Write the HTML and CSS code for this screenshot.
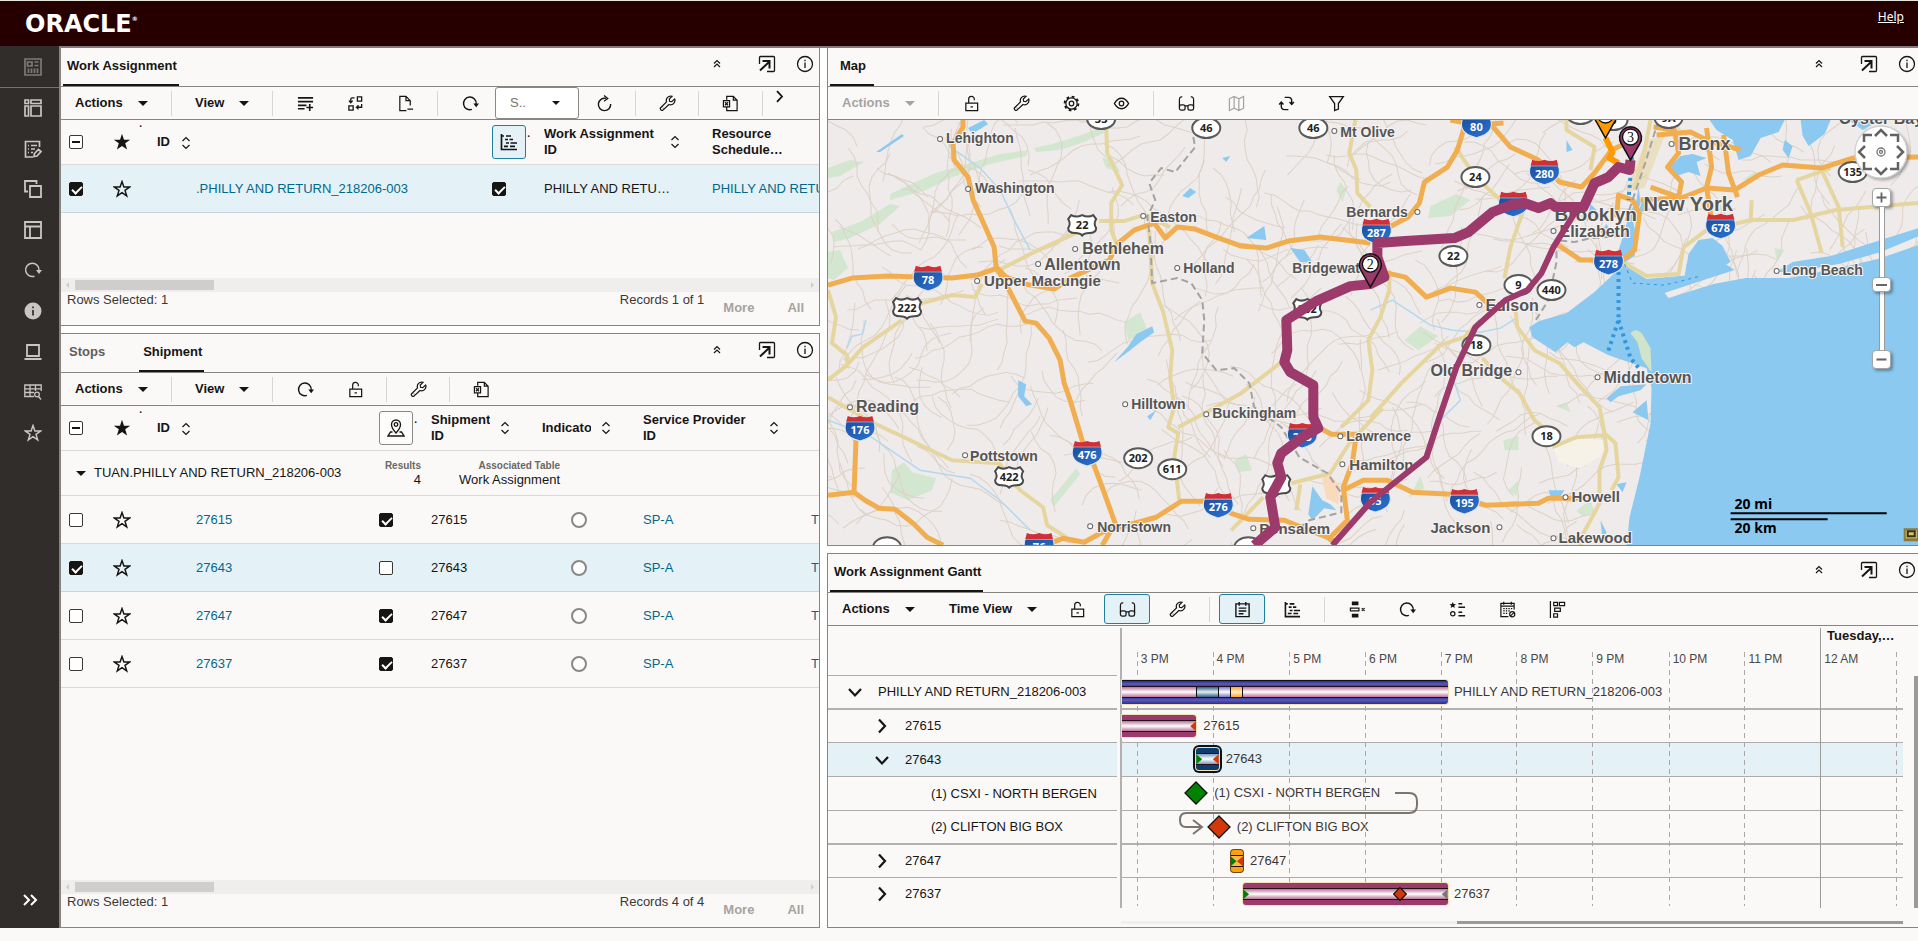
FILE: index.html
```html
<!DOCTYPE html>
<html lang="en">
<head>
<meta charset="utf-8">
<title>Work Assignment Workbench</title>
<link rel="stylesheet" href="styles.css">
</head>
<body>
<svg class="defs" aria-hidden="true">
  <defs>
    <linearGradient id="blue" x1="0" y1="0" x2="1" y2="1"><stop offset="0" stop-color="#1c4f9c"/><stop offset="1" stop-color="#2a74d6"/></linearGradient>
    <symbol id="i-popout" viewBox="0 0 18 18"><path d="M1.5 9V2.5Q1.500 1.500 2.500 1.500H15.500Q16.500 1.500 16.500 2.500V15.500Q16.500 16.500 15.500 16.500H9" /><path d="M2 15.500 11 7M4.500 6H11.500V13.500" stroke-width="2"/></symbol>
    <symbol id="i-info" viewBox="0 0 18 18"><circle cx="9" cy="9" r="7.500"/><path d="M9 7.500v5.500M9 4.800v1.400"/></symbol>
    <symbol id="i-up2" viewBox="0 0 18 18"><path d="M6 8.500 9 5.500l3 3M6 12 9 9l3 3" stroke-width="1.200"/></symbol>
    <symbol id="i-addrow" viewBox="0 0 18 18"><path d="M1 3H17M1 7H17M1 11H10M1 14.500H8M13.500 9.500V17M10 13.200H17" stroke-width="1.700"/></symbol>
    <symbol id="i-swap" viewBox="0 0 18 18"><path d="M11 2h4.500v4.500H11zM2 11.500h4.500V16H2zM8 3H5.500Q4 3 4 4.500V8M2 6l2 2.200L6 6M15.500 9.500V13H10M12.200 10.800 10 13l2.200 2.200" stroke-width="1.400"/></symbol>
    <symbol id="i-docminus" viewBox="0 0 18 18"><path d="M10 16.500H3V1.500H9.500L14 6V11M9.500 1.500V6H14M11 15H17"/></symbol>
    <symbol id="i-redo" viewBox="0 0 18 18"><path d="M10.500 15.200A6.700 6.700 0 1 1 15 9.500" stroke-width="1.500"/><path d="M12 9H18L15 13Z" fill="currentColor" stroke="none"/></symbol>
    <symbol id="i-reload" viewBox="0 0 18 18"><path d="M15.500 9.500A6.500 6.500 0 1 1 10.500 3.700" stroke-width="1.500"/><path d="M8.500 .5 12.500 3.700 8.500 6.500"/></symbol>
    <symbol id="i-wrench" viewBox="0 0 18 18"><path d="M13.800 1.400A4.600 4.600 0 0 0 8 7.300L1.500 13.700Q1 14.500 1.800 15.400 3 17 4.200 16L10.500 10A4.600 4.600 0 0 0 16.600 4.200L13.500 7 11.200 6.600 10.900 4.300Z"/><path d="M4 13.800h.6"/></symbol>
    <symbol id="i-excel" viewBox="0 0 18 18"><path d="M5 5V1.500H12L16 5.500V16.500H5V13M12 1.500V5.500H16M1.500 6H8V12.500H1.500ZM3.200 7.700 6.300 10.800M6.300 7.700 3.200 10.800"/></symbol>
    <symbol id="i-gantt" viewBox="0 0 18 18"><path d="M1.500 1V16.500H17M1.500 3H4M6 3H11M5 6.500H8M9.500 6.500H13M6 10H9M10.500 10H17M4 13.300H8M10 13.300H15" stroke-width="1.700"/></symbol>
    <symbol id="i-lock" viewBox="0 0 18 18"><path d="M3 8.500H15.500V16.500H3ZM6 8.500V4.500A3 3 0 0 1 12 4.300V5.500M8 12.500H10.500"/></symbol>
    <symbol id="i-pinmap" viewBox="0 0 18 18"><path d="M9 14Q4.500 9 4.500 5.500A4.500 4.500 0 0 1 13.500 5.500Q13.500 9 9 14ZM5.500 13H3.500L1 17H17L14.500 13H12.500"/><circle cx="9" cy="5.500" r="1.800"/></symbol>
    <symbol id="i-gear" viewBox="0 0 18 18"><circle cx="9" cy="9" r="2.400"/><circle cx="9" cy="9" r="6"/><circle cx="9" cy="9" r="7.300" stroke-dasharray="2.900 2.830" stroke-width="2"/></symbol>
    <symbol id="i-eye" viewBox="0 0 18 18"><path d="M1.500 9Q4.500 3.500 9 3.500T16.500 9Q13.500 14.500 9 14.500T1.500 9Z" stroke-width="1.500"/><circle cx="9" cy="9" r="2.400"/></symbol>
    <symbol id="i-glasses" viewBox="0 0 18 18"><path d="M4.500 2Q1.500 1.500 1.500 5V12.500M13.500 2Q16.500 1.500 16.500 5V12.500M7.500 11.500H10.500"/><rect x="1.500" y="10.500" width="6" height="5.500" rx="2"/><rect x="10.500" y="10.500" width="6" height="5.500" rx="2"/></symbol>
    <symbol id="i-map" viewBox="0 0 18 18"><path d="M1.500 4 6.500 1.500 11.500 4 16.500 1.500V14L11.500 16.500 6.500 14 1.500 16.500ZM6.500 1.500V14M11.500 4V16.500"/></symbol>
    <symbol id="i-sync" viewBox="0 0 18 18"><path d="M7 2.500H11Q14.500 2.500 14.500 6V9M11 15.500H7Q3.500 15.500 3.500 12V7.500M12.200 7.500l2.300 2.500 2.300-2.500M1.200 10l2.300-2.500L5.800 10" stroke-width="1.500"/></symbol>
    <symbol id="i-funnel" viewBox="0 0 18 18"><path d="M1.800 1.800H16.200L11 9V15L7 16.500V9Z" stroke-width="1.400"/></symbol>
    <symbol id="i-list" viewBox="0 0 18 18"><path d="M2 3H16V16.500H2ZM5.500 1V5M12.500 1V5M5 7.500H13M5 10.500H13M5 13.500H10" stroke-width="1.500"/></symbol>
    <symbol id="i-rows" viewBox="0 0 18 18"><path d="M3 2.500H10M3 15.500H10" stroke-width="4"/><path d="M1.500 7.500H10.500V10.500H1.500ZM13.500 7.500l3 3M16.500 7.500l-3 3"/></symbol>
    <symbol id="i-legend" viewBox="0 0 18 18"><path d="M4 1 5 3.300 7.400 3.500 5.600 5.100 6.200 7.500 4 6.200 1.800 7.500 2.400 5.100.6 3.500 3 3.300Z" fill="currentColor" stroke="none"/><circle cx="4" cy="13.500" r="2.300"/><path d="M10 3H14M10 6.500H17M10 12H14M10 15.500H17" stroke-width="1.600"/></symbol>
    <symbol id="i-calendar" viewBox="0 0 18 18"><path d="M10 16.500H2V2.500H16V9M5 .8V4M13 .8V4M2 5.500H16"/><path d="M4.500 8H14M4.500 10.500H12M4.500 13H10" stroke-dasharray="1.500 1.200"/><circle cx="14" cy="14" r="2.700"/><path d="m12 16 4-4"/></symbol>
    <symbol id="i-tree" viewBox="0 0 18 18"><path d="M1.500 0V18M5 1.500H9V5H5ZM11 1.500H16.500V5H11ZM6 7.500H12V11H6ZM5 13.500H9V17H5Z"/></symbol>
    <symbol id="i-sort" viewBox="0 0 10 14"><path d="M1.500 5 5 1.500 8.500 5M1.500 9 5 12.500 8.500 9" stroke-width="1.200"/></symbol>
    <symbol id="i-star" viewBox="0 0 18 18"><path d="M9 1.600 10.900 7H16.600L12 10.400 13.700 15.900 9 12.600 4.300 15.900 6 10.400 1.400 7H7.100Z" stroke-width="1.500"/></symbol>
    <symbol id="i-starfill" viewBox="0 0 18 18"><path d="M9 .8 11 6.700H17.200L12.200 10.300 14.100 16.600 9 12.900 3.900 16.600 5.800 10.300.8 6.700H7Z" fill="currentColor" stroke="none"/></symbol>
    <symbol id="i-down" viewBox="0 0 18 18"><path d="M3 6 9 12.500 15 6" stroke-width="2.200"/></symbol>
    <symbol id="i-right" viewBox="0 0 18 18"><path d="M6 2.500 12 9 6 15.500" stroke-width="2.200"/></symbol>
    <symbol id="n-dash" viewBox="0 0 18 18"><path d="M1 1H17V17H1ZM3.500 4H8V8H3.500ZM10.500 4H14.500M10.500 7.500H14.500M4.500 10.500V15M7.500 10.500V15M10.500 10.500V15M13.500 10.500V15" stroke-width="1.700"/></symbol>
    <symbol id="n-panels" viewBox="0 0 18 18"><path d="M1 1H4.500V4.500H1ZM7 1H17V4.500H7ZM1 7H4.500V17H1ZM7 7H17V17H7Z" stroke-width="1.700"/></symbol>
    <symbol id="n-note" viewBox="0 0 18 18"><path d="M9 17H1.500V1.500H15.500V7M4 5.500H5M7 5.500H13M4 9H5M7 9H11M4 12.500H5M7 12.500H9M10.500 13.500 14.500 9.500 17 11.500 13 16 10 16.500Z" stroke-width="1.700"/></symbol>
    <symbol id="n-copy" viewBox="0 0 18 18"><path d="M4 11.500H1V1H12.500V4M6 6H17V17H6Z" stroke-width="1.800"/></symbol>
    <symbol id="n-layout" viewBox="0 0 18 18"><path d="M1 1H17V17H1ZM1 5.500H17M6 5.500V17" stroke-width="1.800"/></symbol>
    <symbol id="n-info" viewBox="0 0 18 18"><circle cx="9" cy="9" r="8.500" fill="currentColor" stroke="none"/><path d="M9 8V13.500M9 4.500V6.300" stroke="#312d2a" stroke-width="1.700"/></symbol>
    <symbol id="n-laptop" viewBox="0 0 18 18"><path d="M3 2H15V13H3ZM.5 16H17.500" stroke-width="1.800"/></symbol>
    <symbol id="n-search" viewBox="0 0 18 18"><path d="M10 13.500H.8V2H17.200V8M.8 5.800H17.200M.8 9.500H10M6 2V13.500M11.500 2V8" stroke-width="1.300"/><circle cx="13" cy="11.500" r="2.300"/><path d="m14.500 13.500 2.500 3"/></symbol>
    <symbol id="inter" viewBox="-15 -13 30 26"><path d="M-13-6 Q-15 0-13 4 Q-11 9 0 12 Q11 9 13 4 Q15 0 13-6Z" fill="url(#blue)" stroke="#dfe6f2" stroke-width="1"/><path d="M-13-6-11.500-11.500Q-6-9 0-11.500 6-9 11.500-11.500L13-6Z" fill="#cf3037" stroke="none"/></symbol>
    <symbol id="oval" viewBox="-16 -12 32 24"><ellipse rx="14" ry="10" fill="#fff" stroke="#5a5a5a" stroke-width="2"/></symbol>
    <symbol id="us" viewBox="-16 -12 32 24"><path d="M-11-10Q-6-7 0-10 6-7 11-10L14-6Q11-1 14 3 14 8 7 8 2 8 0 10.500-2 8-7 8-14 8-14 3-11-1-14-6Z" fill="#fff" stroke="#4a4a4a" stroke-width="2"/></symbol>
  </defs>
</svg>

<header class="top">
  <a class="brand" href="#">ORACLE<span class="dot">®</span></a>
  <a class="help" href="#">Help</a>
</header>

<div class="shell">
  <nav class="rail" aria-label="Workbench">
    <button class="rail-btn dim" aria-label="Dashboard"><svg><use href="#n-dash"/></svg></button>
    <div class="rail-list">
      <button class="rail-btn" aria-label="Panels"><svg><use href="#n-panels"/></svg></button>
      <button class="rail-btn" aria-label="Edit layout"><svg><use href="#n-note"/></svg></button>
      <button class="rail-btn" aria-label="Copy"><svg><use href="#n-copy"/></svg></button>
      <button class="rail-btn" aria-label="Layout"><svg><use href="#n-layout"/></svg></button>
      <button class="rail-btn" aria-label="Refresh"><svg><use href="#i-redo"/></svg></button>
      <button class="rail-btn" aria-label="About"><svg><use href="#n-info"/></svg></button>
      <button class="rail-btn" aria-label="Screen"><svg><use href="#n-laptop"/></svg></button>
      <button class="rail-btn" aria-label="Saved search"><svg><use href="#n-search"/></svg></button>
      <button class="rail-btn" aria-label="Favorites"><svg><use href="#i-star"/></svg></button>
    </div>
    <button class="rail-btn expand" aria-label="Expand"><svg viewBox="0 0 18 18"><path d="M3 4 8 9 3 14M10 4 15 9 10 14" stroke-width="2"/></svg></button>
  </nav>

  <main class="work">
    <div class="column">
      <section class="panel assign-panel">
        <div class="tabs">
          <button class="tab active first">Work Assignment</button>
          <div class="tab-tools">
            <button aria-label="Collapse"><svg class="up"><use href="#i-up2"/></svg></button>
            <button aria-label="Open in window"><svg><use href="#i-popout"/></svg></button>
            <button aria-label="Information"><svg><use href="#i-info"/></svg></button>
          </div>
        </div>
        <div class="toolbar">
          <button class="menu">Actions<i class="caret"></i></button><i class="sep"></i>
          <button class="menu">View<i class="caret"></i></button><i class="sep"></i>
          <button class="tool" aria-label="Add row"><svg><use href="#i-addrow"/></svg></button>
          <button class="tool" aria-label="Swap"><svg><use href="#i-swap"/></svg></button>
          <button class="tool" aria-label="Remove"><svg><use href="#i-docminus"/></svg></button><i class="sep"></i>
          <button class="tool" aria-label="Refresh"><svg><use href="#i-redo"/></svg></button>
          <label class="pick"><select aria-label="Saved query"><option>S..</option></select><i class="caret"></i></label>
          <button class="tool" aria-label="Reload"><svg><use href="#i-reload"/></svg></button><i class="sep near"></i>
          <button class="tool" aria-label="Settings"><svg><use href="#i-wrench"/></svg></button><i class="sep near"></i>
          <button class="tool" aria-label="Export"><svg><use href="#i-excel"/></svg></button><i class="sep"></i>
          <button class="more-tools" aria-label="More tools"><svg><use href="#i-right"/></svg></button>
        </div>
        <div class="grid-wrap">
          <table class="grid">
            <colgroup><col class="w-check"><col class="w-star"><col class="w-id-a"><col class="w-icon"><col class="w-name"><col></colgroup>
            <thead><tr>
              <th><input class="partial" type="checkbox" aria-label="Select all"></th>
              <th class="mid"><span class="tiny">.</span><svg><use href="#i-starfill"/></svg></th>
              <th class="idh">ID<button class="sort" aria-label="Sort by ID"><svg><use href="#i-sort"/></svg></button></th>
              <th><button class="boxed on" aria-label="Show in Gantt"><svg><use href="#i-gantt"/></svg></button><span class="tiny low">.</span></th>
              <th><div class="head"><span>Work Assignment ID</span><button class="sort" aria-label="Sort"><svg><use href="#i-sort"/></svg></button></div></th>
              <th><div class="head"><span>Resource<br>Schedule…</span></div></th>
            </tr></thead>
            <tbody><tr class="sel">
              <td><input type="checkbox" checked aria-label="Select row"></td>
              <td class="mid"><button class="plain" aria-label="Favorite"><svg><use href="#i-star"/></svg></button></td>
              <td class="idc"><a href="#">.PHILLY AND RETURN_218206-003</a></td>
              <td><input type="checkbox" checked aria-label="Show in Gantt"></td>
              <td>PHILLY AND RETU…</td>
              <td><a href="#">PHILLY AND RETURN</a></td>
            </tr></tbody>
          </table>
        </div>
        <div class="hscroll"><i class="tri l"></i><i class="thumb"></i><i class="tri r"></i></div>
        <footer class="foot"><span>Rows Selected: 1</span><span class="rec">Records 1 of 1</span><button disabled>More</button><button disabled>All</button></footer>
      </section>

      <section class="panel ship-panel">
        <div class="tabs">
          <button class="tab stops">Stops</button>
          <button class="tab active ship">Shipment</button>
          <div class="tab-tools">
            <button aria-label="Collapse"><svg class="up"><use href="#i-up2"/></svg></button>
            <button aria-label="Open in window"><svg><use href="#i-popout"/></svg></button>
            <button aria-label="Information"><svg><use href="#i-info"/></svg></button>
          </div>
        </div>
        <div class="toolbar">
          <button class="menu">Actions<i class="caret"></i></button><i class="sep"></i>
          <button class="menu">View<i class="caret"></i></button><i class="sep"></i>
          <button class="tool" aria-label="Refresh"><svg><use href="#i-redo"/></svg></button>
          <button class="tool" aria-label="Lock"><svg><use href="#i-lock"/></svg></button><i class="sep near"></i>
          <button class="tool" aria-label="Settings"><svg><use href="#i-wrench"/></svg></button><i class="sep near"></i>
          <button class="tool" aria-label="Export"><svg><use href="#i-excel"/></svg></button>
        </div>
        <div class="grid-wrap">
          <table class="grid">
            <colgroup><col class="w-check"><col class="w-star"><col class="w-id-b"><col class="w-icon"><col class="w-sid"><col class="w-ind"><col class="w-name"><col></colgroup>
            <thead><tr>
              <th><input class="partial" type="checkbox" aria-label="Select all"></th>
              <th class="mid"><span class="tiny">.</span><svg><use href="#i-starfill"/></svg></th>
              <th class="idh">ID<button class="sort" aria-label="Sort by ID"><svg><use href="#i-sort"/></svg></button></th>
              <th><button class="boxed" aria-label="Show on map"><svg><use href="#i-pinmap"/></svg></button><span class="tiny low">.</span></th>
              <th><div class="head"><span>Shipment ID</span><button class="sort" aria-label="Sort"><svg><use href="#i-sort"/></svg></button></div></th>
              <th><div class="head"><span>Indicator</span><button class="sort" aria-label="Sort"><svg><use href="#i-sort"/></svg></button></div></th>
              <th><div class="head"><span>Service Provider ID</span><button class="sort" aria-label="Sort"><svg><use href="#i-sort"/></svg></button></div></th>
              <th><div class="head"><span>Service<br>Type</span></div></th>
            </tr></thead>
            <tbody>
              <tr class="group"><td colspan="8"><div class="group-row"><i class="caret"></i><span class="group-name">TUAN.PHILLY AND RETURN_218206-003</span><span class="stat results"><small>Results</small>4</span><span class="stat assoc"><small>Associated Table</small>Work Assignment</span></div></td></tr>
              <tr>
                <td><input type="checkbox" aria-label="Select 27615"></td><td class="mid"><button class="plain" aria-label="Favorite"><svg><use href="#i-star"/></svg></button></td>
                <td class="idc"><a href="#">27615</a></td><td><input type="checkbox" checked aria-label="Map 27615"></td><td>27615</td><td class="mid"><i class="ring"></i></td><td><a href="#">SP-A</a></td><td><a href="#">TL</a></td>
              </tr>
              <tr class="sel">
                <td><input type="checkbox" checked aria-label="Select 27643"></td><td class="mid"><button class="plain" aria-label="Favorite"><svg><use href="#i-star"/></svg></button></td>
                <td class="idc"><a href="#">27643</a></td><td><input type="checkbox" aria-label="Map 27643"></td><td>27643</td><td class="mid"><i class="ring"></i></td><td><a href="#">SP-A</a></td><td><a href="#">TL</a></td>
              </tr>
              <tr>
                <td><input type="checkbox" aria-label="Select 27647"></td><td class="mid"><button class="plain" aria-label="Favorite"><svg><use href="#i-star"/></svg></button></td>
                <td class="idc"><a href="#">27647</a></td><td><input type="checkbox" checked aria-label="Map 27647"></td><td>27647</td><td class="mid"><i class="ring"></i></td><td><a href="#">SP-A</a></td><td><a href="#">TL</a></td>
              </tr>
              <tr>
                <td><input type="checkbox" aria-label="Select 27637"></td><td class="mid"><button class="plain" aria-label="Favorite"><svg><use href="#i-star"/></svg></button></td>
                <td class="idc"><a href="#">27637</a></td><td><input type="checkbox" checked aria-label="Map 27637"></td><td>27637</td><td class="mid"><i class="ring"></i></td><td><a href="#">SP-A</a></td><td><a href="#">TL</a></td>
              </tr>
            </tbody>
          </table>
        </div>
        <div class="hscroll"><i class="tri l"></i><i class="thumb"></i><i class="tri r"></i></div>
        <footer class="foot"><span>Rows Selected: 1</span><span class="rec">Records 4 of 4</span><button disabled>More</button><button disabled>All</button></footer>
      </section>
    </div>

    <div class="column">
      <section class="panel map-panel">
        <div class="tabs">
          <button class="tab active map-tab">Map</button>
          <div class="tab-tools">
            <button aria-label="Collapse"><svg class="up"><use href="#i-up2"/></svg></button>
            <button aria-label="Open in window"><svg><use href="#i-popout"/></svg></button>
            <button aria-label="Information"><svg><use href="#i-info"/></svg></button>
          </div>
        </div>
        <div class="toolbar">
          <button class="menu" disabled>Actions<i class="caret"></i></button><i class="sep"></i>
          <button class="tool" aria-label="Lock"><svg><use href="#i-lock"/></svg></button>
          <button class="tool" aria-label="Settings"><svg><use href="#i-wrench"/></svg></button>
          <button class="tool" aria-label="Options"><svg><use href="#i-gear"/></svg></button>
          <button class="tool" aria-label="Visibility"><svg><use href="#i-eye"/></svg></button><i class="sep"></i>
          <button class="tool" aria-label="View"><svg><use href="#i-glasses"/></svg></button>
          <button class="tool" aria-label="Map" disabled><svg><use href="#i-map"/></svg></button>
          <button class="tool" aria-label="Sync"><svg><use href="#i-sync"/></svg></button>
          <button class="tool" aria-label="Filter"><svg><use href="#i-funnel"/></svg></button>
        </div>
        <div class="map">
          <svg class="map-svg" viewBox="828 120 1090 425" preserveAspectRatio="xMinYMin slice" role="img" aria-label="Route map">
            <rect x="828" y="120" width="1090" height="425" fill="#efebeb"/>
            <g class="green">
              <path d="M1034 148 1052 144 1084 134 1104 126 1106 132 1084 142 1060 150 1036 152Z"/>
              <path d="M890 194 920 180 938 172 960 166 1000 154 1028 150 1026 156 990 164 950 178 926 190 890 200Z"/>
              <path d="M832 232 860 222 890 204 900 206 880 224 850 238 834 242ZM828 168 850 160 864 162 840 176 828 178Z"/>
              <path d="M828 252 840 250 848 268 834 280 828 278ZM1102 158 1112 158 1120 172 1106 168ZM1340 182 1346 190 1342 202 1336 190Z"/>
              <path d="M892 470 904 462 912 472 936 478 932 490 908 500 890 492ZM1050 500 1076 468 1080 474 1054 506ZM1124 322 1140 312 1148 332 1128 340ZM1234 460 1246 454 1252 470 1238 472Z"/>
              <path d="M1430 206 1456 194 1470 200 1450 216 1428 218ZM1404 340 1420 326 1438 336 1418 350ZM1503 440 1518 436 1518 450 1504 450ZM1508 490 1518 480 1516 496ZM1576 510 1590 500 1594 512 1582 516Z"/>
              <path d="M1728 120 1740 124 1738 132 1726 130ZM1774 248 1784 250 1776 262ZM1612 292 1604 304 1596 306ZM1742 180 1754 172 1760 180ZM1556 406 1566 402 1570 412ZM1420 476 1408 498 1424 488Z"/>
            </g>
            <g class="minor" id="minor"></g>
            <path d="M1552 446 1580 438 1606 440 1600 456 1580 468 1558 462Z" fill="#f6f2e8"/>
            <path d="M1322 478 1328 472 1340 486 1338 504 1326 498Z" fill="#fbd9bd"/>
            <g class="water">
              <path d="M1918 245 1877 259 1838 268 1789 278 1745 278 1713 284 1668 298 1664 293 1700 281 1734 270 1722 262 1690 275 1646 279 1622 264 1612 275 1594 292 1566 313 1538 321 1529 327 1532 337 1555 352 1567 342 1574 347 1583 342 1608 355 1646 368 1651 387 1650 423 1639 477 1629 517 1626 545H1918Z"/>
              <path d="M1709 120H1784L1778 132 1760 138 1750 156 1738 160 1732 140 1716 130ZM1800 120H1830L1824 134 1808 146 1802 136ZM1848 120H1880L1862 130ZM1784 140 1792 146 1788 158 1782 150Z"/>
              <path d="M1684 276 1688 254 1698 240 1712 238 1722 246 1730 262 1716 270 1700 274Z"/>
              <path d="M1636 200 1628 216 1624 232 1618 250 1622 264 1634 256 1636 236 1632 220 1640 204 1638 186ZM1600 232 1606 224 1612 234 1604 238ZM1590 204 1596 210 1586 222Z"/>
              <path d="M1668 168 1680 156 1692 154 1706 158 1696 162 1700 176 1688 172 1676 176ZM1566 140 1572 150 1566 152Z"/>
              <path d="M1776 272 1792 262 1830 256 1880 240 1918 228V236L1880 252 1838 264 1790 272Z"/>
              <path d="M1606 398 1620 386 1646 384 1640 390 1618 396 1610 402ZM1632 412 1646 400 1648 420 1636 414ZM1638 212 1650 210 1642 200Z"/>
              <path d="M1312 486 1322 500 1330 504 1336 510 1324 508 1312 520 1308 514ZM1548 490 1564 490 1560 496 1550 496ZM1616 484 1626 482 1622 492ZM1600 520 1606 532 1602 540Z"/>
              <path d="M1114 362 1128 346 1136 334 1152 326 1154 332 1140 342 1130 350ZM1147 416 1156 410 1150 420ZM1018 380 1026 384 1024 396 1032 404 1026 406 1018 396ZM1182 196 1190 188 1196 192 1188 198ZM1290 248 1304 250 1312 262 1300 262ZM1246 238 1264 226 1266 240Z"/>
              <path d="M968 128 984 120 988 124 972 134ZM876 152 902 134 904 136 880 152ZM1222 158 1230 156 1226 162Z"/>
            </g>
            <path d="M1630 333Q1635 327 1642 334L1650 348 1651 372 1641 358 1637 342Z" fill="#cfe4c8"/>
            <g class="rivers"><path d="M948 145 980 168 1000 190 1014 220 1030 250M828 420 870 436 920 470 970 478 1000 500 1030 530M847 348 852 336 862 334 866 320M1370 310 1392 300 1430 325 1452 330 1480 332 1500 328 1516 318M1440 420 1460 400 1450 370"/></g>
            <g class="yellow">
              <path d="M1106 127 1107 153 1122 185 1111 203 1111 230 1116 243M995 272 1034 252 1082 230M1099 221H1124L1143 215 1170 227M1149 230 1152 283 1163 312 1172 350 1170 377 1174 407 1168 427 1178 433 1174 457 1179 500"/>
              <path d="M1178 427 1206 412 1241 393 1281 362M828 397 874 423 906 438 952 460 999 463 1020 490 1043 507 1047 525 1066 537M828 380 847 365 863 347 902 320M915 305 952 295 975 297 982 284M828 290 836 317 832 343 847 355V368"/>
              <path d="M1355 120 1349 153 1356 170 1357 193 1370 207M1370 418 1401 383 1440 345 1464 337 1480 320M1515 310 1517 327 1534 350 1559 363 1580 387 1599 407 1604 433 1615 443 1618 477 1611 490"/>
              <path d="M1482 358 1503 380 1519 393 1534 420 1546 430M1552 447 1576 437 1604 435 1606 450 1599 470 1599 503 1583 533 1580 545M1389 270 1389 290 1380 317 1368 340 1372 370 1368 400 1341 427M1382 408 1349 443 1330 473 1291 483M1231 530 1263 497"/>
              <path d="M1566 120 1566 130 1594 147 1590 170M1524 207 1510 247 1504 278M1683 247 1706 230 1751 220 1793 220 1835 210 1918 203M1796 180 1810 213 1821 253M1821 170 1838 207 1842 247M1622 262 1646 276 1678 274 1683 247M1640 170 1650 120M1644 150 1634 190M1455 147 1475 177 1500 200M1300 484 1296 510M1751 200 1750 222M1796 180 1830 168"/>
            </g>
            <path d="M1646 140Q1634 168 1626 192L1644 188 1664 136Z" fill="#e6d7a6" opacity=".6"/>
            <g class="orange">
              <path d="M963 120V127L953 143 954 160 968 177 973 200 982 220 994 247 996 267 1009 290 1025 321 1036 323 1049 338 1060 360 1064 383 1070 400 1082 440 1093 463 1102 487 1115 523 1102 545"/>
              <path d="M828 285 852 278 888 276 952 278 977 275 997 268 1006 277 1025 284 1054 289 1070 278 1109 260 1118 243 1134 230 1154 223 1165 238 1177 227 1195 229 1216 237 1241 246 1266 248 1288 241 1320 237 1370 243"/>
              <path d="M828 495 854 492 856 440M854 492 865 500 879 508 895 509 913 523 927 537 943 545M1052 542 1063 538 1084 542 1102 532 1156 517 1181 501H1204L1231 513 1249 519 1284 520 1334 540M1320 428 1331 434H1356L1352 463 1343 487 1347 520 1327 540"/>
              <path d="M1343 490 1363 480H1387L1412 492 1450 494 1485 505 1538 503 1548 498H1580M1464 127 1457 150 1447 167 1424 182 1419 203 1408 217 1387 228M1450 120 1476 125 1503 123M1491 125 1510 147 1538 160 1559 182 1581 187 1594 173 1611 150 1628 142"/>
              <path d="M1387 273 1405 277 1426 297 1450 288 1475 292 1495 310M1555 243 1580 260H1622L1634 250 1639 213 1632 200 1618 195 1616 217M1653 127 1674 130 1678 153 1667 167 1681 182 1678 197 1650 187M1706 128 1711 167 1706 187 1711 220M1723 135 1728 173 1737 197M1640 200 1681 198 1706 188 1734 190 1758 175 1782 165 1821 168 1852 158 1918 157M1656 135 1690 132 1706 140 1740 150"/>
            </g>
            <path class="border" d="M1193 137 1195 147 1175 172 1161 168 1149 183 1155 200 1147 217 1150 240 1152 283 1177 278 1191 283 1202 300 1204 320 1202 353 1216 370 1234 368 1249 383 1254 407 1281 427 1299 457 1327 473 1341 493V512L1309 520 1288 537M1658 120 1644 165 1632 200 1620 236 1590 238 1574 242 1556 240V262L1548 300 1534 322"/>
            <path class="ferry" d="M1618 265V320L1607 353M1618 320 1630 358 1640 370M1632 150 1628 200"/>
            <path class="ferry faint" d="M1624 264 1632 283 1664 285 1700 276"/>
            <g id="shields"></g>
            <g id="places" class="places"></g>
            <path class="route side" d="M1605 138 1612 152 1609 158 1618 163"/>
            <path class="route thin" d="M1576 210 1553 247 1541 273 1527 290 1505 300 1475 327 1456 367 1438 420 1426 457 1391 485 1370 502 1332 545"/>
            <path class="route" d="M1630 160 1629 170 1618 167 1608 177 1594 183 1583 207H1555L1550 203 1538 208 1524 203 1510 205 1492 212 1468 232 1454 238 1405 241 1377 243V257L1384 277 1370 284 1350 286 1316 301 1286 320 1287 350 1284 362 1290 372 1313 385V417L1318 428 1302 437 1281 453 1277 463 1281 477 1270 497 1275 527 1254 545"/>
            <g class="pins">
              <path d="M1605 138 1596 122A11 11 0 1 1 1614 122Z" fill="#ff9a00"/><circle cx="1605" cy="115" r="8"/>
              <path d="M1630 160 1621 144A11 11 0 1 1 1639 144Z" fill="#9b3a6b"/><circle cx="1630" cy="137" r="8"/><text x="1630" y="142">3</text>
              <path d="M1370 287 1361 271A11 11 0 1 1 1379 271Z" fill="#9b3a6b"/><circle cx="1370" cy="264" r="8"/><text x="1370" y="269">2</text>
            </g>
            <g class="scale"><path d="M1730 513H1886M1730 519H1827"/><text x="1734" y="509">20 mi</text><text x="1734" y="533">20 km</text></g>
            <g><rect x="1903" y="528" width="15" height="13" fill="#8d7a3c"/><rect x="1905" y="530" width="11" height="8" fill="#d9c46a"/><rect x="1907" y="531" width="7" height="5" fill="none" stroke="#35301c" stroke-width="2"/></g>
          </svg>
          <div class="map-nav">
            <button class="pan" aria-label="Pan"><svg viewBox="0 0 54 54"><circle cx="27" cy="27" r="26" fill="#fff" stroke="#cfcfcf"/><g stroke="#626262" stroke-width="2.500"><path d="M21 11 27 5 33 11M21 43 27 49 33 43M11 21 5 27 11 33M43 21 49 27 43 33M10 17V10H18M36 10H44V17M10 37V44H18M36 44H44V37"/></g><circle cx="27" cy="27" r="4" stroke="#777"/><circle cx="27" cy="27" r="1.500" stroke="#777"/></svg></button>
            <button class="zoom" aria-label="Zoom in"><svg viewBox="0 0 18 18"><path d="M3 9H15M9 3V15" stroke-width="2.200"/></svg></button>
            <input class="zoom-slider" type="range" min="0" max="100" value="45" aria-label="Zoom level">
            <button class="zoom" aria-label="Zoom out"><svg viewBox="0 0 18 18"><path d="M3 9H15" stroke-width="2.500"/></svg></button>
          </div>
        </div>
      </section>

      <section class="panel gantt-panel">
        <div class="tabs">
          <button class="tab active gantt-tab">Work Assignment Gantt</button>
          <div class="tab-tools">
            <button aria-label="Collapse"><svg class="up"><use href="#i-up2"/></svg></button>
            <button aria-label="Open in window"><svg><use href="#i-popout"/></svg></button>
            <button aria-label="Information"><svg><use href="#i-info"/></svg></button>
          </div>
        </div>
        <div class="toolbar">
          <button class="menu">Actions<i class="caret"></i></button>
          <button class="menu wide">Time View<i class="caret"></i></button>
          <button class="tool" aria-label="Lock"><svg><use href="#i-lock"/></svg></button>
          <button class="tool pressed" aria-label="View"><svg><use href="#i-glasses"/></svg></button>
          <button class="tool" aria-label="Settings"><svg><use href="#i-wrench"/></svg></button><i class="sep"></i>
          <button class="tool pressed" aria-label="Details"><svg><use href="#i-list"/></svg></button>
          <button class="tool" aria-label="Gantt"><svg><use href="#i-gantt"/></svg></button><i class="sep"></i>
          <button class="tool" aria-label="Collapse rows"><svg><use href="#i-rows"/></svg></button>
          <button class="tool" aria-label="Refresh"><svg><use href="#i-redo"/></svg></button>
          <button class="tool" aria-label="Legend"><svg><use href="#i-legend"/></svg></button>
          <button class="tool" aria-label="Calendar"><svg><use href="#i-calendar"/></svg></button>
          <button class="tool" aria-label="Hierarchy"><svg><use href="#i-tree"/></svg></button>
        </div>
        <div class="gantt">
          <div class="names">
            <div class="g-head"></div>
            <div class="g-row thick"><button class="twist" aria-label="Collapse"><svg><use href="#i-down"/></svg></button>PHILLY AND RETURN_218206-003</div>
            <div class="g-row lv2"><button class="twist" aria-label="Expand"><svg><use href="#i-right"/></svg></button>27615</div>
            <div class="g-row lv2 sel"><button class="twist" aria-label="Collapse"><svg><use href="#i-down"/></svg></button>27643</div>
            <div class="g-row lv3">(1) CSXI - NORTH BERGEN</div>
            <div class="g-row lv3 thick">(2) CLIFTON BIG BOX</div>
            <div class="g-row lv2"><button class="twist" aria-label="Expand"><svg><use href="#i-right"/></svg></button>27647</div>
            <div class="g-row lv2 last"><button class="twist" aria-label="Expand"><svg><use href="#i-right"/></svg></button>27637</div>
          </div>
          <div class="timeline">
            <div class="g-head"><span class="day" style="left:89.9%">Tuesday,…</span></div>
            <div class="g-row thick">
              <div class="bar assign flat" style="left:0%;width:41.7%"><div class="lane"><i class="seg blue" style="left:22.7%;width:7.2%"></i><i class="seg gap" style="left:29.9%;width:3.2%"></i><i class="seg gold" style="left:33.1%;width:4.1%"></i></div></div>
              <span class="label" style="left:42.5%">PHILLY AND RETURN_218206-003</span>
            </div>
            <div class="g-row">
              <div class="bar flat" style="left:0%;width:9.5%"><div class="lane"><i class="arrow end"></i></div></div>
              <span class="label" style="left:10.4%">27615</span>
            </div>
            <div class="g-row sel">
              <div class="bar navy picked" style="left:9.5%;width:2.9%"><div class="lane"><i class="arrow start"></i><i class="arrow end"></i></div></div>
              <span class="label" style="left:13.3%">27643</span>
            </div>
            <div class="g-row">
              <svg class="gem go" viewBox="0 0 24 24" style="left:9.5%"><path d="M12 1 23 12 12 23 1 12Z"/></svg>
              <span class="label" style="left:11.8%">(1) CSXI - NORTH BERGEN</span>
              <svg class="link" viewBox="0 0 246 52" style="left:7.1%"><path d="M218 6H232Q240 6 240 14V18Q240 26 232 26H9Q3 26 3 33T9 40H24M16 33 25 40 16 47"/></svg>
            </div>
            <div class="g-row thick">
              <svg class="gem stop" viewBox="0 0 24 24" style="left:12.4%"><path d="M12 1 23 12 12 23 1 12Z"/></svg>
              <span class="label" style="left:14.7%">(2) CLIFTON BIG BOX</span>
            </div>
            <div class="g-row">
              <div class="bar amber" style="left:13.9%;width:1.6%"><div class="lane"><i class="arrow start"></i><i class="arrow end"></i></div></div>
              <span class="label" style="left:16.4%">27647</span>
            </div>
            <div class="g-row last">
              <div class="bar" style="left:15.5%;width:26.2%"><div class="lane"><i class="arrow start"></i><i class="arrow end gray"></i></div></div>
              <svg class="gem stop small" viewBox="0 0 24 24" style="left:35.6%"><path d="M12 1 23 12 12 23 1 12Z"/></svg>
              <span class="label" style="left:42.5%">27637</span>
            </div>
            <div class="hours">
              <span style="left:1.9%">3 PM</span><span style="left:11.6%">4 PM</span><span style="left:21.4%">5 PM</span><span style="left:31.1%">6 PM</span><span style="left:40.8%">7 PM</span><span style="left:50.5%">8 PM</span><span style="left:60.2%">9 PM</span><span style="left:70%">10 PM</span><span style="left:79.7%">11 PM</span><span class="solid" style="left:89.4%">12 AM</span><span style="left:99.1%"></span>
            </div>
          </div>
          <div class="g-side"><i></i></div>
        </div>
        <div class="g-scroll"><i></i></div>
      </section>
    </div>
  </main>
</div>
<script src="script.js"></script>
</body>
</html>
```
FILE: styles.css
```css
:root {
  --ink: #161513;
  --line: #878582;
  --soft: #dcdad8;
  --paper: #fbf9f8;
  --pick: #e4f1f7;
  --link: #00688c;
  --plum: #9b3a6b;
}
* { box-sizing: border-box; }
body {
  margin: 0;
  min-height: 100vh;
  display: flex;
  flex-direction: column;
  padding-bottom: 13px;
  background: var(--paper);
  color: var(--ink);
  font: 13px/16px "Liberation Sans", Arial, sans-serif;
}
.defs { position: absolute; width: 0; height: 0; }
svg { fill: none; stroke: currentColor; stroke-width: 1.3; width: 18px; height: 18px; display: block; }
button { font: inherit; color: inherit; border: 0; background: none; padding: 0; margin: 0; }
a { color: var(--link); text-decoration: none; }
i { font-style: normal; }

.top {
  height: 48px;
  flex: none;
  display: flex;
  justify-content: space-between;
  align-items: flex-start;
  padding: 0 14px 0 25px;
  background: #260000;
  border-top: 1px solid #e6e8df;
  border-bottom: 2px solid #857a7c;
}
.brand { color: #fff; font: bold 24px/46px "DejaVu Sans", sans-serif; display: flex; align-items: flex-start; }
.brand .dot { font-size: 6px; line-height: 36px; }
.help { color: #fff; text-decoration: underline; font: 12px/16px "Noto Sans", sans-serif; padding-top: 8px; }

.shell { flex: 1; display: flex; min-height: 0; }
.rail { width: 61px; flex: none; background: #312d2a; border-right: 2px solid #878380; display: flex; flex-direction: column; color: #c9c6c4; margin-top: -2px; }
.rail-btn { display: grid; place-items: center; padding-left: 6px; width: 100%; }
.rail-btn.dim { height: 42px; color: #7d7a78; border-bottom: 1px solid #77736f; }
.rail-list { display: grid; grid-auto-rows: 1fr; height: 365px; }
.rail .expand { margin-top: auto; height: 56px; color: #fff; padding-left: 0; }

.work { flex: 1; display: grid; grid-template-columns: 759fr 1091fr; column-gap: 7px; background: #fff; min-width: 0; }
.column { display: flex; flex-direction: column; gap: 7px; min-width: 0; }
.panel { background: var(--paper); border: 1px solid var(--line); display: flex; flex-direction: column; min-height: 0; overflow: hidden; }
.assign-panel { flex: 278 1 0; border-left: 0; border-top: 0; }
.ship-panel { flex: 595 1 0; border-left: 0; }
.map-panel { flex: 499 1 0; border-right: 0; border-top: 0; }
.gantt-panel { flex: 374 1 0; border-right: 0; }

.tabs { height: 39px; flex: none; display: flex; border-bottom: 1px solid var(--line); }
.tab { height: 38px; padding: 0 2px; font-weight: bold; border-bottom: 2px solid transparent; color: #605d5a; }
.tab.active { border-bottom-color: var(--ink); color: var(--ink); }
.tab.first, .gantt-tab { margin-left: 2px; padding-left: 4px; }
.tab.stops { margin-left: 6px; }
.tab.ship { margin-left: 32px; padding: 0 2px 0 4px; }
.map-tab { margin-left: 2px; padding: 0 8px 0 10px; }
.tab-tools { margin-left: auto; display: flex; gap: 32px; padding: 7px 5px 0 0; align-items: flex-start; }
.tab-tools button + button + button { margin-left: -12px; }
.map-panel .tab-tools, .gantt-panel .tab-tools { padding-right: 2px; }

.toolbar { height: 33px; flex: none; display: flex; align-items: center; border-bottom: 1px solid var(--line); }
.menu { width: 103px; height: 32px; flex: none; display: flex; align-items: center; gap: 15px; padding-left: 14px; font-weight: bold; }
.sep + .menu { width: 86px; padding-left: 16px; }
.menu + .menu { width: 121px; padding-left: 18px; }
.menu:disabled, .tool:disabled { color: #a5a3a1; }
.caret { border: 5px solid transparent; border-top-color: currentColor; border-bottom: 0; flex: none; }
.sep { width: 1px; height: 25px; margin: 0 7px; background: #d8d6d4; flex: none; }
.sep.near { margin: 0 6px; }
.tool { width: 50px; height: 32px; flex: none; display: grid; place-items: center; }
.tool.pressed { width: 46px; height: 30px; margin: 0 2px; background: var(--pick); border: 1px solid #1f7f9f; border-radius: 3px; }
.tool svg { width: 17px; height: 17px; }
.pick { width: 84px; height: 32px; flex: none; display: flex; align-items: center; padding: 0 18px 0 14px; border: 1px solid #8a8886; border-radius: 3px; background: #fff; }
.pick select { appearance: none; flex: 1; min-width: 0; border: 0; padding: 0; background: none; font: inherit; color: #767370; }
.pick .caret { border-width: 4px; border-bottom-width: 0; }
.more-tools { margin: 0 0 14px 2px; }
.more-tools svg { width: 15px; height: 15px; }

.grid-wrap { flex: 1; overflow: hidden; }
.grid { width: 100%; border-collapse: separate; border-spacing: 0; table-layout: fixed; }
.grid .w-check { width: 40px; }
.grid .w-star { width: 41px; }
.grid .w-id-a { width: 336px; }
.grid .w-id-b { width: 223px; }
.grid .w-icon { width: 52px; }
.grid .w-sid { width: 111px; }
.grid .w-ind { width: 101px; }
.grid .w-name { width: 168px; }
.grid th { height: 45px; text-align: left; padding: 0 0 0 14px; border-bottom: 1px solid var(--soft); position: relative; }
.grid th:first-child, .grid td:first-child { padding-left: 8px; }
.grid td { height: 48px; padding: 0 0 0 14px; border-bottom: 1px solid var(--soft); white-space: nowrap; overflow: hidden; }
.grid .mid { padding: 0; }
.grid .mid svg, .grid .ring { margin: 0 auto; }
.grid .mid .plain { display: block; margin: 0 auto; }
.grid .sel { background: var(--pick); }
.grid .sel td { border-bottom-color: #c3d5de; }
.grid .idh { padding-left: 15px; }
.grid .idc { padding-left: 54px; }
.idh .sort { margin-left: 11px; vertical-align: middle; }
.sort svg { width: 10px; height: 14px; }
.tiny { position: absolute; right: 0; top: -4px; font-size: 10px; }
.tiny.low { top: 6px; }
.head { display: flex; align-items: center; justify-content: space-between; padding-right: 18px; }
.head span { overflow: hidden; min-width: 0; line-height: 16px; }
.head .sort { flex: none; margin-left: 10px; }
.boxed { width: 34px; height: 34px; display: grid; place-items: center; border: 1px solid #8a8886; border-radius: 3px; background: #fdfcfb; }
.boxed.on { background: var(--pick); border-color: #1f7f9f; }
.ring { display: block; width: 16px; height: 16px; border: 2px solid #8a8886; border-radius: 50%; background: #fff; }

input[type="checkbox"] { appearance: none; display: block; width: 14px; height: 14px; margin: 0; border: 1px solid #3a3836; border-radius: 2px; background: #fff; position: relative; }
input[type="checkbox"]:checked { background: var(--ink); border-color: var(--ink); }
input[type="checkbox"]:checked::after { content: ""; position: absolute; left: 4px; top: 1px; width: 4px; height: 8px; border: solid #fff; border-width: 0 2px 2px 0; transform: rotate(45deg); }
input.partial::after { content: ""; position: absolute; left: 2px; top: 5px; width: 8px; height: 2px; background: var(--ink); }

.group-row { display: flex; align-items: center; gap: 8px; padding-left: 7px; }
.grid .group td { height: 45px; }
.stat { display: flex; flex-direction: column; align-items: flex-end; line-height: 14px; }
.stat small { font-size: 10px; font-weight: bold; color: #6b6865; line-height: 14px; }
.group-name { width: 246px; }
.results { width: 73px; }
.assoc { width: 131px; }

.hscroll { height: 14px; flex: none; display: flex; align-items: center; background: #efeeec; padding: 0 5px; }
.hscroll .thumb { width: 139px; height: 10px; margin-left: 6px; background: #d0cecc; }
.tri { border: 3px solid transparent; }
.tri.l { border-left: 0; border-right-color: #cfcdcb; }
.tri.r { border-right: 0; border-left-color: #cfcdcb; margin-left: auto; }
.foot { height: 33px; flex: none; display: flex; align-items: flex-start; padding: 0 15px 0 6px; color: #3a3836; }
.foot .rec { margin-left: auto; margin-right: 19px; }
.foot button { font-weight: bold; color: #a5a3a1; padding-top: 8px; }
.foot button + button { margin-left: 33px; }

.map { flex: 1; position: relative; min-height: 0; overflow: hidden; }
.map-svg { width: 100%; height: 100%; stroke: none; }
.green path { fill: #d3e6cf; }
.water path { fill: #8bc9f0; }
.rivers path { fill: none; stroke: #b3d9ee; stroke-width: 1.5; }
.minor path { fill: none; stroke: #ddd2c6; stroke-width: 1; }
.yellow path { fill: none; stroke: #e5d6a0; stroke-width: 4; stroke-linejoin: round; }
.orange path { fill: none; stroke: #f0ae50; stroke-width: 5; stroke-linejoin: round; }
.border { fill: none; stroke: #a3a3a3; stroke-width: 2; stroke-dasharray: 7 4; }
.ferry { fill: none; stroke: #3296dc; stroke-width: 4; stroke-dasharray: 3 4; }
.ferry.faint { stroke-width: 1; }
.route { fill: none; stroke: var(--plum); stroke-width: 10; stroke-linejoin: round; }
.route.thin { stroke-width: 6; }
.route.side { stroke: #ff9a00; stroke-width: 6; }
.places text { font-weight: bold; fill: #555; stroke: #f6f3f2; stroke-width: 2; paint-order: stroke; }
.places circle { fill: #fff; stroke: #666; stroke-width: 1; }
.shield { text-anchor: middle; font: bold 11px "Noto Sans", sans-serif; stroke: none; fill: #222; }
.shield.light { fill: #fff; }
.pins path { stroke: #111; stroke-width: 1.5; }
.pins circle { fill: #fff; stroke: #111; }
.pins text { font: 14px "Liberation Serif", serif; text-anchor: middle; fill: #111; }
.scale path { stroke: #000; stroke-width: 2; }
.scale text { font: bold 14px "Noto Sans", sans-serif; fill: #000; }
.map-nav { position: absolute; top: 5px; right: 10px; display: flex; flex-direction: column; align-items: center; color: #666; }
.pan { margin-bottom: 9px; }
.pan svg { width: 54px; height: 54px; filter: drop-shadow(2px 2px 1px #0004); }
.zoom { width: 19px; height: 19px; display: grid; place-items: center; background: #fff; border: 1px solid #a5a5a5; border-radius: 4px; box-shadow: 2px 2px 3px #0005; }
.zoom svg { width: 15px; height: 15px; }
.zoom-slider { appearance: none; writing-mode: vertical-lr; direction: rtl; width: 19px; height: 143px; margin: 0; background: linear-gradient(90deg, transparent 7px, #9a9a9a 7px 8px, #fff 8px 12px, #9a9a9a 12px 13px, transparent 13px); }
.zoom-slider::-webkit-slider-thumb { appearance: none; width: 19px; height: 15px; border: 1px solid #a5a5a5; border-radius: 4px; background: linear-gradient(#666, #666) center / 11px 2px no-repeat #fff; box-shadow: 2px 2px 3px #0005; }

.gantt { flex: 1; display: grid; grid-template-columns: 292px 1fr 15px; min-height: 0; padding-top: 2px; }
.g-head { height: 48px; border-bottom: 1px solid #aeacaa; position: relative; }
.timeline .g-head { border-bottom-color: transparent; }
.names { margin-right: 3px; }
.g-row { height: 34px; display: flex; align-items: center; gap: 14px; border-bottom: 1px solid #aeacaa; position: relative; padding-left: 18px; }
.g-row.thick { border-bottom: 2px solid #b3b1af; }
.g-row.thick + .g-row { height: 33px; }
.g-row.last { border-bottom: 0; height: 32px; }
.g-row.sel { background: var(--pick); }
.g-row.lv2 { padding-left: 45px; }
.g-row.lv3 { padding-left: 103px; }
.twist svg { width: 18px; height: 18px; }
.timeline { position: relative; border-left: 2px solid #b3b1af; height: 280px; }
.day { position: absolute; top: 0; margin-left: 3px; font-weight: bold; }
.label { position: absolute; top: 8px; white-space: nowrap; color: #3a3836; }
.hours span { position: absolute; top: 24px; height: 254px; padding: 0 0 0 4px; font-size: 12px; line-height: 14px; color: #4a4846; background: repeating-linear-gradient(#a9a7a5 0 5px, transparent 5px 9px) left / 1px 100% no-repeat; }
.hours .solid { top: 0; height: 280px; padding-top: 24px; background: linear-gradient(#9c9a98, #9c9a98) left / 1px 100% no-repeat; }
.bar { position: absolute; top: 5px; height: 22px; padding: 5px 0; background: var(--plum); border-radius: 3px; box-shadow: 0 0 0 1px #eee2b4; z-index: 1; }
.bar.flat { border-radius: 0 3px 3px 0; }
.lane { height: 12px; position: relative; border: solid #24101a; border-width: 1px 0; background: linear-gradient(#b97498, #fff 50%, #b97498); }
.bar.assign { top: 4px; height: 24px; padding: 6px 0; background: linear-gradient(#111 0 1px, #2b2b92 1px, #5c5cb8 4px, #2b2b92 7px, #2b2b92 17px, #5c5cb8 20px, #2b2b92); }
.bar.navy { background: #0d3c6e; }
.bar.navy .lane { background: linear-gradient(#7d9cc0, #fff, #7d9cc0); }
.bar.picked { box-shadow: 0 0 0 1px #eee2b4, 0 0 0 3px #111; }
.bar.amber { background: #ff9f12; box-shadow: 0 0 0 1px #6b4a10; }
.bar.amber .lane { background: #ffb84d; }
.seg { position: absolute; top: 0; bottom: 0; border: solid #111; border-width: 0 1px; }
.seg.blue { background: linear-gradient(#2f5f80, #e4eef4, #2f5f80); }
.seg.gap { background: linear-gradient(#7878cc, #fff, #7878cc); border: 0; }
.seg.gold { background: linear-gradient(#ffa626, #fff0d0, #ffa626); }
.arrow { position: absolute; top: 0; width: 6px; height: 10px; background: green; clip-path: polygon(0 0, 100% 50%, 0 100%); }
.arrow.start { left: 0; }
.arrow.end { right: 0; background: #d2380a; clip-path: polygon(100% 0, 0 50%, 100% 100%); }
.arrow.gray { background: #77777a; }
.gem { position: absolute; top: 4px; width: 24px; height: 24px; margin-left: -12px; stroke: #111; z-index: 1; }
.gem.go { fill: #008200; }
.gem.stop { fill: #d2380a; }
.gem.small { width: 14px; height: 16px; margin-left: -7px; top: 8px; stroke-width: 2; }
.link { position: absolute; top: 10px; width: 246px; height: 52px; stroke: #7b756f; stroke-width: 2; z-index: 1; }
.g-side { padding-top: 48px; }
.g-side i { display: block; margin-left: 11px; height: 232px; background: #9b9a98; }
.g-scroll { height: 3px; margin: 0 15px 3px 293px; background: #f0efee; flex: none; }
.g-scroll i { display: block; height: 3px; width: 57%; margin-left: auto; background: #9b9a98; }
```
FILE: script.js
```js
const NS = "http://www.w3.org/2000/svg";

function add(parent, name, attrs, text) {
  const el = document.createElementNS(NS, name);
  for (const key in attrs) el.setAttribute(key, attrs[key]);
  if (text) el.textContent = text;
  parent.appendChild(el);
  return el;
}

// Local roads: short wandering lines with a fixed seed.
let seed = 7;
const rand = () => (seed = (seed * 16807) % 2147483647) / 2147483647;
const minor = document.getElementById("minor");
for (let n = 0; n < 420; n++) {
  let x = 828 + rand() * 1090;
  let y = 120 + rand() * 425;
  let angle = rand() * Math.PI * 2;
  let d = `M${x.toFixed(0)} ${y.toFixed(0)}`;
  const steps = 5 + rand() * 8;
  for (let i = 0; i < steps; i++) {
    angle += (rand() - 0.5) * 0.9;
    x += Math.cos(angle) * 10;
    y += Math.sin(angle) * 10;
    d += `L${x.toFixed(0)} ${y.toFixed(0)}`;
  }
  add(minor, "path", { d });
}

const shields = [
  ["inter", 928, 278, "78"], ["inter", 1476, 125, "80"], ["inter", 1544, 172, "280"], ["inter", 1376, 231, "287"],
  ["inter", 1720, 226, "678"], ["inter", 1608, 262, "278"], ["inter", 1513, 204, ""], ["inter", 1087, 453, "476"],
  ["inter", 860, 428, "176"], ["inter", 1218, 505, "276"], ["inter", 1302, 435, "295"], ["inter", 1375, 499, "95"],
  ["inter", 1464, 501, "195"], ["inter", 1039, 545, "76"],
  ["us", 1082, 225, "22"], ["us", 907, 308, "222"], ["us", 1307, 309, "202"], ["us", 1009, 477, "422"], ["us", 1276, 485, ""],
  ["oval", 1101, 119, "33"], ["oval", 1206, 128, "46"], ["oval", 1313, 128, "46"], ["oval", 1475, 177, "24"],
  ["oval", 1453, 256, "22"], ["oval", 1518, 285, "9"], ["oval", 1551, 290, "440"], ["oval", 1476, 345, "18"],
  ["oval", 1546, 436, "18"], ["oval", 1138, 458, "202"], ["oval", 1172, 469, "611"], ["oval", 1852, 172, "135"],
  ["oval", 1668, 118, "9A"], ["oval", 1580, 114, ""], ["oval", 1613, 120, "3"], ["oval", 887, 547, ""], ["oval", 1248, 547, ""]
];
const shieldLayer = document.getElementById("shields");
for (const [kind, x, y, text] of shields) {
  const w = kind === "inter" ? 32 : 32;
  const h = kind === "inter" ? 28 : 24;
  add(shieldLayer, "use", { href: "#" + kind, x: x - w / 2, y: y - h / 2, width: w, height: h });
  add(shieldLayer, "text", { class: kind === "inter" ? "shield light" : "shield", x, y: y + (kind === "inter" ? 6 : 4) }, text);
}

// name, text x, baseline, size, dot x, dot y
const places = [
  ["Lehighton", 946, 143, 14, 940, 139], ["Washington", 975, 193, 14, 968, 189], ["Easton", 1150, 222, 14, 1143, 216],
  ["Bethlehem", 1082, 254, 16, 1075, 249], ["Allentown", 1044, 270, 16, 1038, 264], ["Upper Macungie", 984, 286, 15, 977, 281],
  ["Holland", 1183, 273, 14, 1177, 268], ["Bridgewater", 1292, 273, 14], ["Mt Olive", 1340, 137, 14, 1334, 131],
  ["Bernards", 1346, 217, 14, 1417, 212], ["Bronx", 1678, 150, 18, 1671, 144], ["New York", 1643, 211, 20],
  ["Brooklyn", 1554, 221, 19], ["Elizabeth", 1559, 237, 16, 1553, 231], ["Long Beach", 1782, 275, 14, 1776, 271],
  ["Oyster Bay", 1838, 124, 16], ["Reading", 856, 412, 16, 850, 407], ["Pottstown", 970, 461, 14, 965, 455],
  ["Hilltown", 1131, 409, 14, 1125, 404], ["Buckingham", 1212, 418, 14, 1206, 414], ["Lawrence", 1346, 441, 14, 1340, 436],
  ["Hamilton", 1349, 470, 15, 1342, 464], ["Norristown", 1097, 532, 14, 1090, 526], ["Bensalem", 1259, 534, 15, 1253, 528],
  ["Edison", 1485, 311, 16, 1479, 305], ["Old Bridge", 1430, 376, 16, 1518, 372], ["Middletown", 1603, 383, 16, 1597, 377],
  ["Howell", 1571, 502, 15, 1565, 497], ["Jackson", 1430, 533, 15, 1499, 527], ["Lakewood", 1558, 543, 15, 1553, 538]
];
const placeLayer = document.getElementById("places");
for (const [name, x, y, size, cx, cy] of places) {
  add(placeLayer, "text", { x, y, "font-size": size }, name);
  if (cx) add(placeLayer, "circle", { cx, cy, r: 2.5 });
}
```
